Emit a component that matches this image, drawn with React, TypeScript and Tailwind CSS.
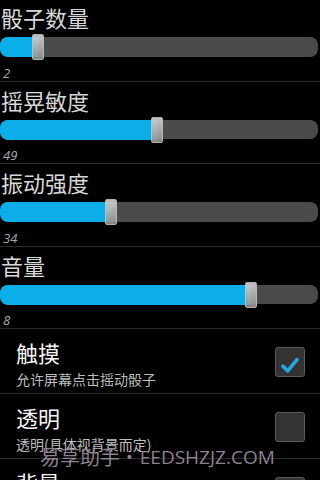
import React from 'react';

const cjk = { fontFamily: '"Noto Sans CJK SC", "Noto Sans", sans-serif' };

interface SliderPrefProps {
  title: string;
  value: string;
  thumb: number; // thumb centre in px
}

function SliderPref({ title, value, thumb }: SliderPrefProps) {
  return (
    <div className="h-[82.5px] border-b border-[#2c2c2c] flex flex-col pt-[7px]">
      <div className="text-[22px] leading-[22px] text-[#d8d8d8] pl-[1px]" style={cjk}>
        {title}
      </div>
      <div className="relative mt-[9px] h-[20px] w-[318px] rounded-lg bg-[#4b4b4b]">
        <div
          className="absolute left-0 top-0 h-[20px] rounded-l-lg bg-[#0caeea]"
          style={{ width: thumb }}
        />
        <div
          className="absolute top-[-3px] h-[26px] w-[12px] rounded-[2px] border border-[#c4c4c4] bg-gradient-to-b from-[#d4d4d4] via-[#b4b4b4] to-[#939393] opacity-90"
          style={{ left: thumb - 6 }}
        />
      </div>
      <div
        className="mt-[8px] pl-[3px] text-[13px] leading-[16px] italic text-[#a8a8a8]"
        style={{ fontFamily: '"Open Sans", "DejaVu Sans", sans-serif' }}
      >
        {value}
      </div>
    </div>
  );
}

interface CheckPrefProps {
  title: string;
  summary: string;
  checked: boolean;
}

function CheckPref({ title, summary, checked }: CheckPrefProps) {
  return (
    <div className="h-[65px] border-b border-[#2c2c2c] flex items-start justify-between pl-4 pr-[15px]">
      <div className="flex flex-col pt-[12px]" style={cjk}>
        <div className="text-[22px] leading-[22px] text-[#f4f4f4]">{title}</div>
        <div className="mt-[7px] text-[14px] leading-[18px] text-[#bdbdbd]">{summary}</div>
      </div>
      <div className="mt-[18px] h-[30px] w-[30px] rounded-[3px] border border-[#5a5a5a] bg-[#333333] flex items-center justify-center">
        {checked && (
          <svg width="30" height="30" viewBox="0 0 30 30">
            <polyline
              points="7.5,19.5 12.5,24.5 22.5,12.5"
              fill="none"
              stroke="#2aa4de"
              strokeWidth="4"
              strokeLinecap="round"
              strokeLinejoin="round"
            />
          </svg>
        )}
      </div>
    </div>
  );
}

export default function App() {
  return (
    <div className="relative h-[480px] w-[320px] overflow-hidden bg-black">
      <div className="mt-[-1px] flex flex-col">
        <SliderPref title="骰子数量" value="2" thumb={38} />
        <SliderPref title="摇晃敏度" value="49" thumb={157} />
        <SliderPref title="振动强度" value="34" thumb={111} />
        <SliderPref title="音量" value="8" thumb={251} />
        <CheckPref title="触摸" summary="允许屏幕点击摇动骰子" checked />
        <CheckPref title="透明" summary="透明(具体视背景而定)" checked={false} />
        <CheckPref title="背景" summary="" checked={false} />
      </div>
      <div className="absolute left-[40px] top-[447px] flex items-center whitespace-nowrap text-[#8e7f92] leading-[20px]">
        <span className="text-[20px]" style={cjk}>易享助手</span>
        <span
          className="ml-[6px] text-[18px]"
          style={{ fontFamily: '"Open Sans", sans-serif' }}
        >
          •
        </span>
        <span
          className="ml-[7px] text-[19px]"
          style={{ fontFamily: '"Open Sans", sans-serif' }}
        >
          EEDSHZJZ.COM
        </span>
      </div>
    </div>
  );
}
